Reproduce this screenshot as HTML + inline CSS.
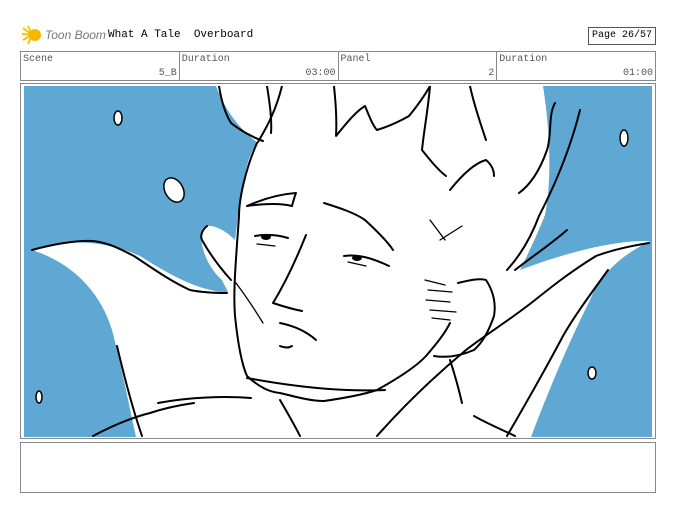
<!DOCTYPE html>
<html><head><style>
body{margin:0;width:676px;height:523px;background:#fff;font-family:"Liberation Mono",monospace;position:relative;overflow:hidden}
.abs{position:absolute}
.t{font-size:10px;color:#555}
</style></head><body>
<svg class="abs" style="left:22px;top:25px" width="24" height="20" viewBox="0 0 24 20">
<g stroke="#f5c400" stroke-width="2"><line x1="10" y1="10" x2="1" y2="3"/><line x1="10" y1="10" x2="0" y2="9"/><line x1="10" y1="10" x2="1" y2="15"/><line x1="10" y1="10" x2="6" y2="19"/><line x1="10" y1="10" x2="6" y2="1"/></g>
<circle cx="13" cy="10" r="6" fill="#f5b800"/></svg>
<div class="abs" style="left:45px;top:28px;font-family:'Liberation Sans',sans-serif;font-style:italic;font-size:12px;color:#777">Toon Boom</div>
<div class="abs" style="left:108px;top:29px;font-size:11px;color:#000">What A Tale&nbsp; Overboard</div>
<div class="abs" style="left:588px;top:27px;width:66px;height:16px;border:1px solid #555;font-size:10px;line-height:16px;text-align:center">Page 26/57</div>
<div class="abs" style="left:20px;top:51px;width:634px;height:28px;border:1px solid #888;display:flex">
 <div style="flex:1;border-right:1px solid #888;position:relative"><span class="abs t" style="left:2px;top:2px">Scene</span><span class="abs t" style="right:2px;bottom:1px">5_B</span></div>
 <div style="flex:1;border-right:1px solid #888;position:relative"><span class="abs t" style="left:2px;top:2px">Duration</span><span class="abs t" style="right:2px;bottom:1px">03:00</span></div>
 <div style="flex:1;border-right:1px solid #888;position:relative"><span class="abs t" style="left:2px;top:2px">Panel</span><span class="abs t" style="right:2px;bottom:1px">2</span></div>
 <div style="flex:1;position:relative"><span class="abs t" style="left:2px;top:2px">Duration</span><span class="abs t" style="right:2px;bottom:1px">01:00</span></div>
</div>
<div class="abs" style="left:20px;top:83px;width:634px;height:354px;border:1px solid #888"></div>
<svg class="abs" style="left:24px;top:86px" width="628" height="351" viewBox="24 86 628 351">
<rect x="24" y="86" width="628" height="351" fill="#5fa8d3"/>
<path d="M216 86 L543 86 C550 130 552 180 545 215 C535 240 525 260 520 270 C560 255 610 240 650 241 C620 256 600 275 590 300 C565 350 545 400 531 437 L136 437 C128 400 120 360 112 330 C100 290 70 262 32 250 C60 240 100 238 140 256 C170 275 200 292 228 292 L222 280 C205 265 198 240 203 228 C210 222 225 230 235 240 L240 200 C245 170 250 150 258 143 C240 130 225 110 216 86Z" fill="#fff"/>
<g fill="none" stroke="#000" stroke-width="2" stroke-linecap="round" stroke-linejoin="round">
<path d="M257 143 C245 170 239 200 239 216 C236 260 233 290 235 316 C238 345 242 365 247 376 C260 388 270 392 280 393 C300 398 312 401 324 401 C345 398 365 394 377 390 C395 380 415 368 426 356 C438 342 445 333 450 323"/>
<path d="M247 378 C290 386 340 392 385 390"/>
<path d="M219 86 C222 105 226 115 231 123 C240 130 252 137 263 141"/>
<path d="M267 86 C270 105 272 120 271 133"/>
<path d="M282 86 C276 110 268 125 258 142"/>
<path d="M334 86 C336 105 337 120 336 136 C345 125 355 112 365 106 C370 118 373 126 377 130 C390 126 402 120 409 116 C418 105 425 95 430 86"/>
<path d="M430 86 C428 110 424 130 422 150 C430 160 438 170 446 176"/>
<path d="M470 86 C474 105 480 122 486 140"/>
<path d="M450 190 C462 175 475 163 486 160 C492 165 494 170 494 176"/>
<path d="M555 103 C548 115 552 135 547 150 C540 170 530 185 519 193"/>
<path d="M580 110 C570 150 555 185 539 216 C530 240 518 258 507 270"/>
<path d="M567 230 C550 245 530 258 515 270"/>
<path d="M32 250 C50 245 75 240 93 241 C110 243 122 250 134 256 C155 270 172 282 190 290 C205 293 218 293 227 293"/>
<path d="M117 346 C125 380 133 410 142 436"/>
<path d="M649 243 C630 246 612 250 596 256 C570 272 550 288 535 300 C510 320 485 335 466 350 C430 380 400 410 377 436"/>
<path d="M608 270 C590 295 575 315 563 336 C545 370 525 405 507 436"/>
<path d="M474 416 C490 425 503 430 515 436"/>
<path d="M458 283 C470 280 480 278 486 280 C494 292 496 305 494 316 C488 333 482 343 474 350 C460 356 446 358 434 356"/>
<path d="M207 226 C202 230 200 236 202 240 C212 258 222 270 231 280"/>
<path d="M247 206 C265 198 282 194 296 193 C294 198 293 202 292 206 C280 203 262 204 247 206"/>
<path d="M324 203 C340 208 355 213 365 220 C378 232 388 242 393 250"/>
<path d="M255 236 C266 234 278 235 288 238"/>
<path d="M344 256 C358 254 372 258 389 266"/>
<path d="M306 235 C296 260 284 285 273 303 C282 306 292 309 302 311"/>
<path d="M280 323 C295 326 307 332 316 340"/>
<path d="M280 346 C285 348 289 348 292 346"/>
<path d="M158 403 C190 397 225 396 251 398"/>
<path d="M93 436 C112 426 130 418 150 413 C165 408 180 405 194 403"/>
<path d="M280 400 C287 412 294 424 300 436"/>
<path d="M450 360 C455 375 459 390 462 403"/>
</g>
<g fill="none" stroke="#000" stroke-width="1.3" stroke-linecap="round">
<path d="M425 280 L445 285 M428 290 L452 292 M426 300 L450 302 M430 310 L456 312 M432 318 L450 320"/>
<path d="M440 240 L462 226 M430 220 L445 240"/>
<path d="M236 283 C245 295 255 310 263 323"/>
<path d="M257 244 L275 246 M348 262 L366 266"/>
</g>
<ellipse cx="266" cy="237" rx="5" ry="3" fill="#000"/>
<ellipse cx="357" cy="258" rx="5" ry="3" fill="#000"/>
<g fill="#fff" stroke="#000" stroke-width="1.5">
<ellipse cx="174" cy="190" rx="9" ry="13" transform="rotate(-30 174 190)"/>
<ellipse cx="118" cy="118" rx="4" ry="7"/>
<ellipse cx="624" cy="138" rx="4" ry="8"/>
<ellipse cx="592" cy="373" rx="4" ry="6"/>
<ellipse cx="39" cy="397" rx="3" ry="6"/>
</g>
</svg>
<div class="abs" style="left:20px;top:442px;width:634px;height:49px;border:1px solid #888"></div>
</body></html>
